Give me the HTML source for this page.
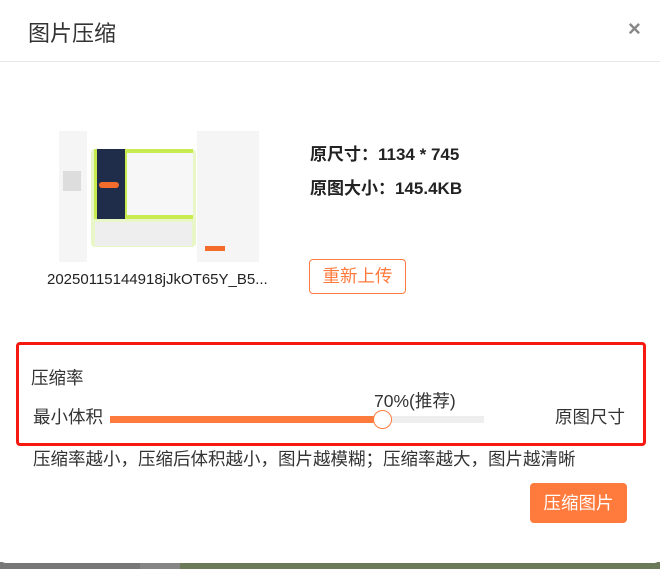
<!DOCTYPE html>
<html><head><meta charset="utf-8"><style>
*{margin:0;padding:0;box-sizing:border-box}
body{width:660px;height:569px;overflow:hidden;background:#fff;font-family:"Liberation Sans","Noto Sans CJK SC",sans-serif;position:relative;color:#333}
.abs{position:absolute;white-space:nowrap}
</style></head><body>
<div class="abs" style="left:0;top:562px;width:140px;height:7px;background:#777"></div>
<div class="abs" style="left:140px;top:562px;width:40px;height:7px;background:#858585"></div>
<div class="abs" style="left:180px;top:562px;width:480px;height:7px;background:#6b7a58"></div>
<div class="abs" style="left:0;top:0;width:660px;height:563px;background:#fff;border-radius:0 0 6px 6px"></div>
<div class="abs" style="left:28px;top:16px;font-size:22px;color:#333">图片压缩</div>
<div class="abs" style="left:628px;top:16px;font-size:22px;font-weight:bold;color:#888">×</div>
<div class="abs" style="left:0;top:61px;width:660px;height:1px;background:#e8e8e8"></div>

<div class="abs" style="left:59px;top:131px;width:200px;height:131px;background:#f4f5f4;overflow:hidden">
  <div class="abs" style="left:28px;top:0;width:110px;height:131px;background:#fff"></div>
  <div class="abs" style="left:32px;top:18px;width:105px;height:98px;background:#e8f6c8;border-radius:4px"></div>
  <div class="abs" style="left:35px;top:18px;width:99px;height:70px;background:#c8ec50"></div>
  <div class="abs" style="left:38px;top:18px;width:28px;height:70px;background:#1f2d4a"></div>
  <div class="abs" style="left:40px;top:51px;width:20px;height:6px;background:#f36c2c;border-radius:3px"></div>
  <div class="abs" style="left:68px;top:22px;width:66px;height:62px;background:#f7f7f7"></div>
  <div class="abs" style="left:36px;top:91px;width:97px;height:24px;background:#eee"></div>
  <div class="abs" style="left:146px;top:115px;width:20px;height:5px;background:#f36c2c"></div>
  <div class="abs" style="left:4px;top:40px;width:18px;height:20px;background:#ddd"></div>
</div>
<div class="abs" style="left:47px;top:271px;font-size:15px;color:#222">20250115144918jJkOT65Y_B5...</div>

<div class="abs" style="left:310px;top:140px;font-size:17px;font-weight:bold;color:#222">原尺寸：1134 * 745</div>
<div class="abs" style="left:310px;top:174px;font-size:17px;font-weight:bold;color:#222">原图大小：145.4KB</div>
<div class="abs" style="left:309px;top:259px;width:97px;height:35px;border:1px solid #ff7b3d;border-radius:4px;color:#ff7b3d;font-size:17.5px;text-align:center;line-height:32px">重新上传</div>

<div class="abs" style="left:16px;top:342px;width:630px;height:104px;border:3px solid #f5190f;border-radius:4px"></div>
<div class="abs" style="left:31px;top:365px;font-size:17.5px;color:#333">压缩率</div>
<div class="abs" style="left:33px;top:404px;font-size:17.5px;color:#333">最小体积</div>
<div class="abs" style="left:555px;top:404px;font-size:17.5px;color:#333">原图尺寸</div>
<div class="abs" style="left:374px;top:388px;font-size:17.5px;color:#333">70%(推荐)</div>
<div class="abs" style="left:110px;top:416px;width:374px;height:7px;background:#eee"></div>
<div class="abs" style="left:110px;top:416px;width:272px;height:7px;background:#ff7b3d"></div>
<div class="abs" style="left:373px;top:410px;width:19px;height:19px;border:1px solid #ff7b3d;border-radius:50%;background:#fff"></div>

<div class="abs" style="left:33px;top:446px;font-size:17.5px;color:#333">压缩率越小，压缩后体积越小，图片越模糊；压缩率越大，图片越清晰</div>
<div class="abs" style="left:530px;top:483px;width:97px;height:40px;background:#ff7b3d;border-radius:4px;color:#fff;font-size:17.5px;text-align:center;line-height:40px">压缩图片</div>
</body></html>
